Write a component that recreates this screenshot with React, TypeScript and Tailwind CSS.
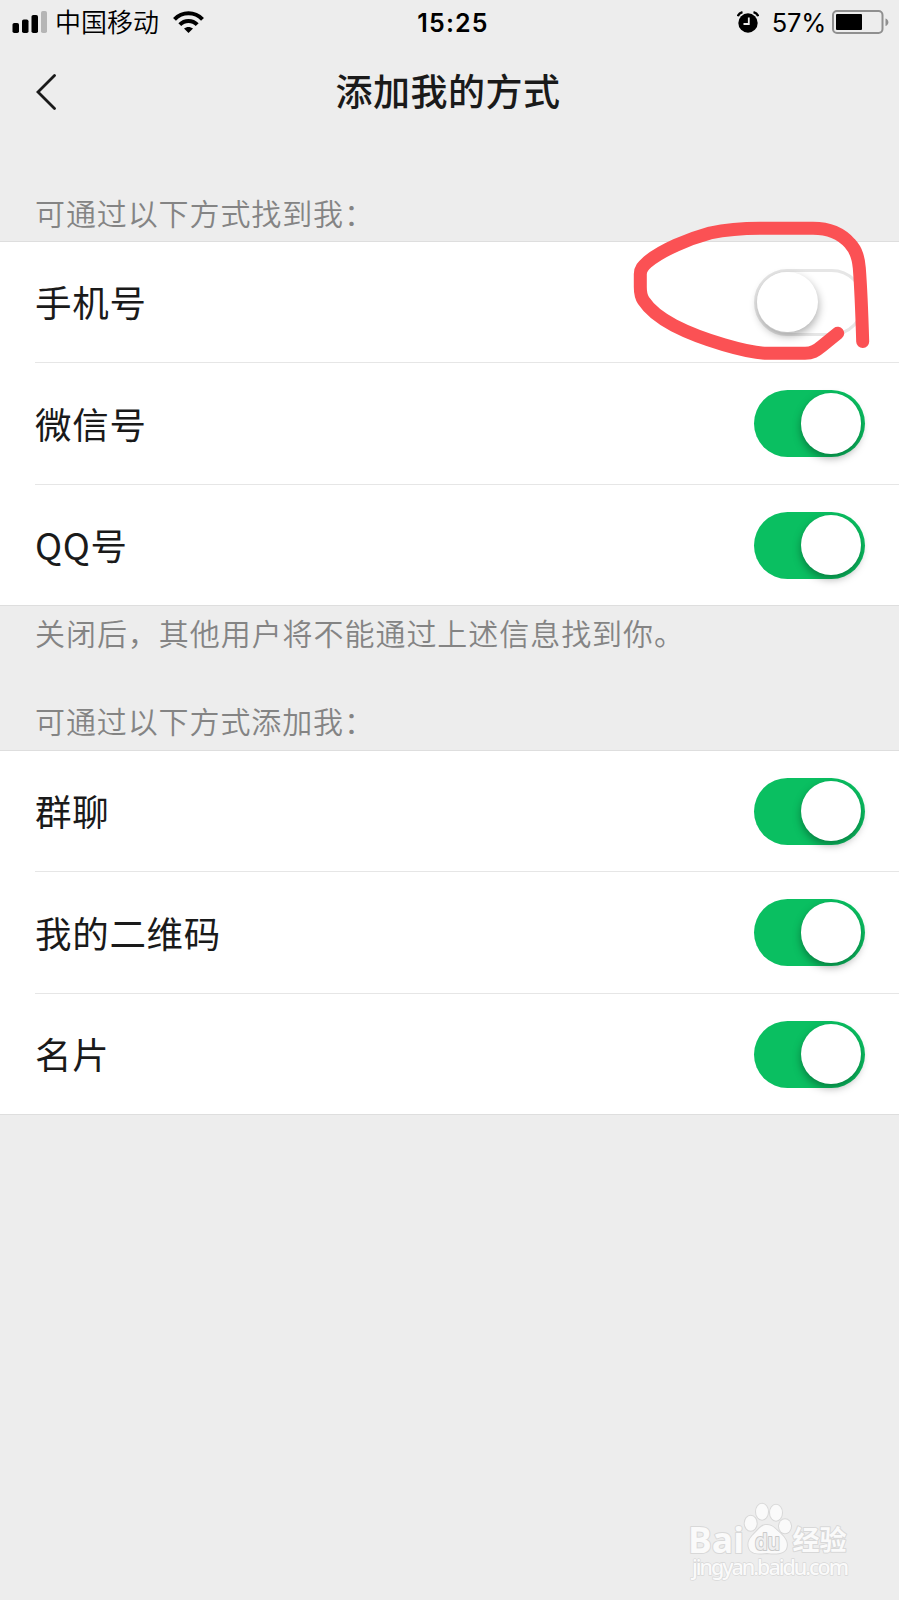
import { useState } from "react";
import clsx from "clsx";

const findMethods = ["手机号", "微信号", "QQ号"];
const addMethods = ["群聊", "我的二维码", "名片"];

function StatusBar() {
  return (
    <div className="flex h-[44px] items-center pl-[12px] pr-[10px] text-black">
      <div className="flex flex-1 items-center">
        <svg width="35" height="22" viewBox="0 0 35 22">
          <rect x="0.5" y="12" width="6.5" height="10" rx="1.8" />
          <rect x="10" y="8.5" width="6.5" height="13.5" rx="1.8" />
          <rect x="19.5" y="4" width="6.5" height="18" rx="1.8" />
          <rect x="29" y="0" width="6" height="22" rx="1.8" fill="#b5b5b5" />
        </svg>
        <span className="ml-[8px] pt-[2px] text-[26px] font-[350] leading-[44px]">中国移动</span>
        <svg className="ml-[14px]" width="31" height="22" viewBox="0 0 31 22" fill="none" stroke="#000" strokeWidth="4">
          <path d="M1.5 8.3C9.2 0.2 21.8 0.2 29.5 8.3" />
          <path d="M6.8 13.7C11.6 8.7 19.4 8.7 24.2 13.7" />
          <path d="M15.5 22L11 17.6C13.5 15.3 17.5 15.3 20 17.6Z" fill="#000" stroke="none" />
        </svg>
      </div>
      <span className="ml-[3px] mr-[-2px] pt-[2px] text-[25px] font-semibold leading-[44px] tracking-[1.2px]">15:25</span>
      <div className="flex flex-1 items-center justify-end">
        <svg width="22" height="22" viewBox="0 0 22 22">
          <circle cx="11" cy="12" r="9.7" />
          <path d="M0.8 5.2C1.5 3.2 3.2 1.8 5.5 1.2M21.2 5.2C20.5 3.2 18.8 1.8 16.5 1.2" fill="none" stroke="#000" strokeWidth="2.4" />
          <path d="M11.8 6.5V13H6.5" fill="none" stroke="#ededed" strokeWidth="1.8" />
        </svg>
        <span className="ml-[13px] pt-[2px] text-[25.5px] leading-[44px] tracking-[-0.2px]">57%</span>
        <svg className="ml-[6px]" width="57" height="24" viewBox="0 0 57 24">
          <rect x="1" y="1" width="49.5" height="22" rx="4" fill="none" stroke="#8f8f8f" strokeWidth="2" />
          <rect x="4" y="4" width="26" height="16" rx="1" />
          <path d="M53.5 8.5C57.3 9.5 57.3 15 53.5 16Z" fill="#8f8f8f" />
        </svg>
      </div>
    </div>
  );
}

function Toggle({ on, onClick }: { on: boolean; onClick: () => void }) {
  return (
    <button
      role="switch"
      aria-checked={on}
      onClick={onClick}
      className={clsx(
        "flex h-[67px] w-[111px] items-center rounded-full",
        on ? "justify-end bg-[#0abf61] pr-[4px]" : "border-[3px] border-[#e6e6e6] bg-white"
      )}
    >
      <span
        className={clsx(
          "size-[60.5px] rounded-full bg-white",
          on ? "shadow-[0_4px_9px_rgba(0,0,0,0.35)]" : "shadow-[1px_4px_8px_rgba(0,0,0,0.3)]"
        )}
      />
    </button>
  );
}

function MethodList({ items, defaultOff = [] }: { items: string[]; defaultOff?: string[] }) {
  const [off, setOff] = useState<string[]>(defaultOff);

  const toggle = (item: string) => {
    setOff(off.includes(item) ? off.filter((o) => o !== item) : [...off, item]);
  };

  return (
    <ul className="grid h-[365px] grid-rows-[121px_122px_120px] border-y border-[#dedede] bg-white pl-[35px]">
      {items.map((item, i) => (
        <li
          key={item}
          className={clsx(
            "flex items-center justify-between pr-[34px]",
            i < items.length - 1 && "border-b border-[#e6e6e6]"
          )}
        >
          <span className="font-['Noto_Sans_CJK_SC',sans-serif] text-[36.5px] leading-[60px] tracking-[0.7px] text-[#1a1a1a]">
            {item}
          </span>
          <Toggle on={!off.includes(item)} onClick={() => toggle(item)} />
        </li>
      ))}
    </ul>
  );
}

function Watermark() {
  return (
    <svg
      className="absolute left-[684px] top-[1496px]"
      width="180"
      height="90"
      viewBox="0 0 180 90"
      fill="#fafafa"
      stroke="#d8d8d8"
      strokeWidth="2"
      strokeLinejoin="round"
      paintOrder="stroke"
    >
      <text x="4" y="56.5" fontSize="36" fontWeight="700" textLength="56" lengthAdjust="spacingAndGlyphs" className="font-['Open_Sans']">
        Bai
      </text>
      <ellipse cx="66.7" cy="27.3" rx="6" ry="7.5" />
      <ellipse cx="78" cy="15.7" rx="6" ry="8" />
      <ellipse cx="92" cy="16.7" rx="6" ry="8" />
      <ellipse cx="101" cy="30.3" rx="6" ry="7" />
      <path d="M83 29C77 29 75 33 71 37C66 42 63 46 65 52C67 58 74 58 83 57C92 58 99 58 102 53C105 46 100 41 96 37C91 33 89 29 83 29Z" />
      <text x="71" y="53.5" fontSize="23" fontWeight="600" fill="#efefef" stroke="#c9c9c9" textLength="25" lengthAdjust="spacingAndGlyphs">
        du
      </text>
      <text x="108.5" y="54" fontSize="27" fontWeight="700">
        经验
      </text>
      <text x="8" y="78.5" fontSize="21.5" fontWeight="500" textLength="157" strokeWidth="1.3" className="font-['Noto_Sans']">
        jingyan.baidu.com
      </text>
    </svg>
  );
}

export default function App() {
  return (
    <main className="relative h-[1600px] w-[899px] overflow-hidden bg-[#ededed] font-['Inter','Noto_Sans_CJK_SC',sans-serif]">
      <StatusBar />

      <header className="flex h-[97px] items-center px-[36px]">
        <button className="mt-[-2px] flex-1" aria-label="返回">
          <svg width="21" height="36" viewBox="0 0 21 36" fill="none" stroke="#1a1a1a" strokeWidth="2.8" strokeLinecap="round">
            <path d="M18.5 1.5L2 18L18.5 34.5" />
          </svg>
        </button>
        <h1 className="pt-[1px] text-[37px] font-medium leading-[60px] tracking-[0.5px] text-[#1a1a1a]">添加我的方式</h1>
        <div className="mr-[3px] flex-1" />
      </header>

      <h2 className="mt-[43px] h-[57px] pl-[35px] text-[30px] font-[350] leading-[60px] tracking-[0.9px] text-[#848484]">
        可通过以下方式找到我：
      </h2>
      <MethodList items={findMethods} defaultOff={["手机号"]} />

      <p className="h-[58px] pl-[35px] text-[30px] font-[350] leading-[56px] tracking-[0.95px] text-[#848484]">
        关闭后，其他用户将不能通过上述信息找到你。
      </p>
      <h2 className="mt-[28px] h-[58px] pl-[35px] text-[30px] font-[350] leading-[60px] tracking-[0.9px] text-[#848484]">
        可通过以下方式添加我：
      </h2>
      <MethodList items={addMethods} />

      {/* hand-drawn mark around the first switch */}
      <svg
        className="pointer-events-none absolute left-[620px] top-[210px]"
        width="260"
        height="160"
        viewBox="620 210 260 160"
        fill="none"
        stroke="#fb5154"
        strokeWidth="13"
        strokeLinecap="round"
        strokeLinejoin="round"
      >
        <path d="M837.7 333.3L822 346C816 351 812 353.3 805 353.3H767C748 353 702 340 674 325.5C660 318 649 309 643.5 300.5C640.5 296 640.3 292 640.3 287V274C640.3 269 643 266 647.5 262C662 250 688 239 710 233C729 229 745 228.3 760 228.3H813C830 228.3 842 234.5 850 243.5C857 251 858.5 259 859.3 268C861 290 862 318 862.7 341.5" />
      </svg>

      <Watermark />
    </main>
  );
}
